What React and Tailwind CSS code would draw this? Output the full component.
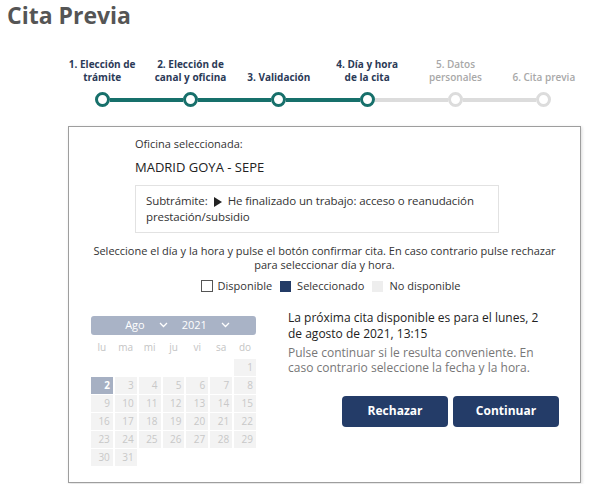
import React from 'react';

const steps = [
  { label: ['1. Elección de', 'trámite'], done: true },
  { label: ['2. Elección de', 'canal y oficina'], done: true },
  { label: ['3. Validación'], done: true },
  { label: ['4. Día y hora', 'de la cita'], done: true, current: true },
  { label: ['5. Datos', 'personales'], done: false },
  { label: ['6. Cita previa'], done: false },
];

const teal = 'bg-[#17706b]';

function Stepper() {
  return (
    <div className="grid grid-cols-6 w-[530px] ml-[58px] mt-[26px]">
      {steps.map((s, i) => {
        const leftOn = i > 0 && steps[i].done;
        const rightOn = i < steps.length - 1 && steps[i + 1].done;
        return (
          <div key={i} className="flex flex-col items-center">
            <div className="h-[28px] flex flex-col justify-end items-center text-center">
              {s.label.map((l, j) => (
                <div
                  key={j}
                  className={
                    'text-[10px] leading-[13px] ' +
                    (s.done ? 'font-bold text-[#2b3a57]' : 'font-semibold text-[#a8a8a8]')
                  }
                >
                  {l}
                </div>
              ))}
            </div>
            <div className="flex items-center w-full mt-[8px]">
              <div className={'flex-1 h-[4px] ' + (i === 0 ? '' : leftOn ? teal : 'bg-[#dcdcdc]')} />
              <div
                className={
                  'w-[15px] h-[15px] rounded-full bg-white border-[3px] ' +
                  (s.done ? 'border-[#17706b]' : 'border-[#dcdcdc]')
                }
              />
              <div
                className={
                  'flex-1 h-[4px] ' + (i === steps.length - 1 ? '' : rightOn ? teal : 'bg-[#dcdcdc]')
                }
              />
            </div>
          </div>
        );
      })}
    </div>
  );
}

const dayNames = ['lu', 'ma', 'mi', 'ju', 'vi', 'sa', 'do'];
const cells = [
  null, null, null, null, null, null, 1,
  2, 3, 4, 5, 6, 7, 8,
  9, 10, 11, 12, 13, 14, 15,
  16, 17, 18, 19, 20, 21, 22,
  23, 24, 25, 26, 27, 28, 29,
  30, 31, null, null, null, null, null,
];

function Chevron() {
  return (
    <svg width="9" height="6" viewBox="0 0 9 6" className="ml-[14px]">
      <path d="M1 1l3.5 3.5L8 1" fill="none" stroke="white" strokeWidth="1.3" />
    </svg>
  );
}

function Calendar() {
  return (
    <div className="w-[165px]">
      <div className="h-[19px] rounded-[3px] bg-[#a9b3c6] flex items-center justify-center text-white text-[11px]">
        <span className="ml-[8px]">Ago</span>
        <Chevron />
        <span className="ml-[14px]">2021</span>
        <Chevron />
      </div>
      <div className="grid grid-cols-7 gap-x-[2px] mt-[4px] text-[10px] text-[#c4c4c4] text-center">
        {dayNames.map((d) => (
          <div key={d} className="h-[16px] leading-[16px]">{d}</div>
        ))}
      </div>
      <div className="grid grid-cols-7 gap-x-[2px] gap-y-[1px] mt-[4px]">
        {cells.map((c, i) =>
          c === null ? (
            <div key={i} className="h-[17px]" />
          ) : (
            <div
              key={i}
              className={
                'h-[17px] text-[10px] leading-[17px] text-right pr-[3px] ' +
                (c === 2 ? 'bg-[#a6b0c3] text-white font-bold' : 'bg-[#f3f3f3] text-[#c8c8c8]')
              }
            >
              {c}
            </div>
          )
        )}
      </div>
    </div>
  );
}

export default function App() {
  return (
    <div className="w-[600px] h-[484px] bg-white overflow-hidden" style={{ fontFamily: '"Open Sans", sans-serif' }}>
      <h1 className="text-[23px] leading-[30px] font-bold text-[#555555] pl-[7px]">Cita Previa</h1>
      <Stepper />
      <div className="ml-[68px] mt-[19px] w-[513px] h-[357px] border border-[#9e9e9e] shadow-[1px_1px_3px_rgba(0,0,0,0.15)]">
        <div className="pl-[66px] pt-[9px]">
          <div className="text-[11px] leading-[16px] text-[#333]">Oficina seleccionada:</div>
          <div className="text-[13px] leading-[18px] text-[#222] mt-[6px]">MADRID GOYA - SEPE</div>
          <div className="w-[364px] mt-[9px] border border-[#e2e2e2] px-[10px] py-[7px] text-[11.5px] leading-[16px] text-[#333] tracking-[-0.1px]">
            <span>Subtrámite:</span>
            <span className="inline-block align-middle mx-[6px] w-0 h-0 border-y-[5px] border-y-transparent border-l-[8px] border-l-[#222]" />
            <span>He finalizado un trabajo: acceso o reanudación prestación/subsidio</span>
          </div>
        </div>
        <div className="mt-[11px] text-center text-[11px] leading-[14px] text-[#333] px-[20px]">
          Seleccione el día y la hora y pulse el botón confirmar cita. En caso contrario pulse rechazar
          <br />
          para seleccionar día y hora.
        </div>
        <div className="flex items-center justify-center mt-[6px] text-[11px] text-[#333] ml-[12px]">
          <span className="w-[12px] h-[12px] border border-[#555] mr-[5px]" />
          <span>Disponible</span>
          <span className="w-[11px] h-[11px] bg-[#233b66] ml-[8px] mr-[6px]" />
          <span>Seleccionado</span>
          <span className="w-[11px] h-[11px] bg-[#eeeeee] ml-[8px] mr-[6px]" />
          <span>No disponible</span>
        </div>
        <div className="flex mt-[21px] pl-[22px]">
          <Calendar />
          <div className="ml-[32px] w-[271px] -mt-[6px]">
            <div className="w-[255px] text-[12px] leading-[16px] text-[#222]">
              La próxima cita disponible es para el lunes, 2 de agosto de 2021, 13:15
            </div>
            <div className="w-[255px] text-[12px] leading-[15px] text-[#777] mt-[3px]">
              Pulse continuar si le resulta conveniente. En caso contrario seleccione la fecha y la hora.
            </div>
            <div className="flex justify-end gap-[5px] mt-[21px]">
              <button className="w-[106px] h-[31px] rounded-[4px] bg-[#243c68] text-white text-[12px] font-bold">
                Rechazar
              </button>
              <button className="w-[106px] h-[31px] rounded-[4px] bg-[#243c68] text-white text-[12px] font-bold">
                Continuar
              </button>
            </div>
          </div>
        </div>
      </div>
    </div>
  );
}
